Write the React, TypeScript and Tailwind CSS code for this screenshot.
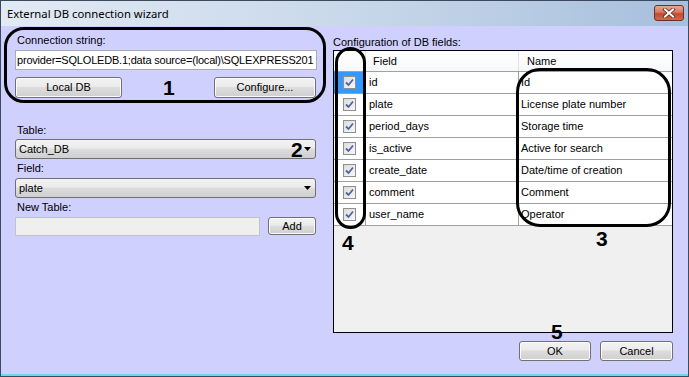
import React from "react";

const btnBg =
  "bg-[linear-gradient(#f3f3f3,#ebebeb_45%,#dddddd_50%,#cfcfcf)]";

function Btn({ children, className = "" }: { children: React.ReactNode; className?: string }) {
  return (
    <div
      className={`flex items-center justify-center rounded-[3px] border border-[#707070] ${btnBg} text-[11px] leading-[13px] text-black shadow-[inset_0_0_0_1px_#fcfcfc] ${className}`}
    >
      {children}
    </div>
  );
}

function Arrow() {
  return (
    <svg width="7" height="4" viewBox="0 0 7 4" className="shrink-0">
      <path d="M0 0 H7 L3.5 4 Z" fill="#000" />
    </svg>
  );
}

function Combo({ value }: { value: string }) {
  return (
    <div
      className={`ml-[11px] flex h-[20px] w-[301px] items-center rounded-[3px] border border-[#707070] ${btnBg} pl-[3px] pr-[4px] text-[11px] leading-[13px]`}
    >
      <span className="flex-1">{value}</span>
      <Arrow />
    </div>
  );
}

function Check() {
  return (
    <div className="flex h-[13px] w-[13px] items-center justify-center border border-[#8e8f8f] bg-[linear-gradient(135deg,#dcdcdc,#f8f8f8)]">
      <svg width="11" height="11" viewBox="0 0 11 11">
        <path d="M2 5.5 L4.5 8 L9 2.5" fill="none" stroke="#4f65a0" strokeWidth="1.8" />
      </svg>
    </div>
  );
}

const rows: [string, string][] = [
  ["id", "Id"],
  ["plate", "License plate number"],
  ["period_days", "Storage time"],
  ["is_active", "Active for search"],
  ["create_date", "Date/time of creation"],
  ["comment", "Comment"],
  ["user_name", "Operator"],
];

const num = "absolute text-[21px] font-bold leading-[21px] text-black";

export default function App() {
  return (
    <div className="relative flex h-[377px] w-[689px] flex-col overflow-hidden border border-[#3b4a5c] bg-[#d0d0ff] font-['Liberation_Sans',Arial,sans-serif] text-black">
      {/* Title bar */}
      <div className="flex h-[25px] shrink-0 bg-[linear-gradient(to_right,#e2eaf4,#c6d6e9_55%,#a6bfdc)]">
        <div className="flex-1 pl-[6px] pt-[5px] font-['Noto_Sans',sans-serif] text-[11.3px] leading-[15px] text-black">
          External DB connection wizard
        </div>
        <div className="mr-[4px] mt-[4px] flex h-[16px] w-[30px] items-center justify-center rounded-[3px] border border-[#6e2f24] bg-[linear-gradient(#e9a792,#d77760_45%,#c4492f_55%,#cf6a50)]">
          <svg width="14" height="10" viewBox="0 0 14 10">
            <path d="M3 1.5 L11 8.5 M11 1.5 L3 8.5" stroke="#5b2a22" strokeWidth="3.6" strokeLinecap="square" />
            <path d="M3 1.5 L11 8.5 M11 1.5 L3 8.5" stroke="#fff" strokeWidth="2" strokeLinecap="square" />
          </svg>
        </div>
      </div>

      {/* Body */}
      <div className="flex flex-1">
        {/* Left column */}
        <div className="flex w-[325px] flex-col pl-[3px]">
          <div className="mt-[1px] h-[76px] w-[322px] rounded-[20px] border-[3px] border-black px-[8px] pt-[4px]">
            <div className="pl-[2px] text-[11px] leading-[13px]">Connection string:</div>
            <div className="mt-[3px] flex h-[20px] w-[302px] items-center overflow-hidden whitespace-nowrap border border-[#abadb3] bg-white pl-[1px] text-[11px] leading-[13px] tracking-[-0.2px]">
              provider=SQLOLEDB.1;data source=(local)\SQLEXPRESS201
            </div>
            <div className="mt-[7px] flex w-[301px] justify-between">
              <Btn className="h-[21px] w-[107px]">Local DB</Btn>
              <Btn className="h-[21px] w-[102px]">Configure...</Btn>
            </div>
          </div>

          <div className="ml-[13px] mt-[21px] text-[11px] leading-[13px]">Table:</div>
          <div className="mt-[2px]">
            <Combo value="Catch_DB" />
          </div>
          <div className="ml-[13px] mt-[3px] text-[11px] leading-[13px]">Field:</div>
          <div className="mt-[3px]">
            <Combo value="plate" />
          </div>
          <div className="ml-[13px] mt-[3px] text-[11px] leading-[13px]">New Table:</div>
          <div className="ml-[11px] mt-[3px] flex items-start">
            <div className="h-[19px] w-[245px] border border-[#c3c3c3] bg-[#efefef]" />
            <Btn className="ml-[8px] h-[18px] w-[48px]">Add</Btn>
          </div>
        </div>

        {/* Right column */}
        <div className="ml-[7px] flex w-[340px] flex-col pt-[9px]">
          <div className="text-[11px] leading-[14px]">Configuration of DB fields:</div>
          <div className="mt-[1px] flex h-[283px] flex-col border border-black bg-[#f0f0f0]">
            <div className="flex h-[21px] border-b border-[#a0a0a0] bg-[linear-gradient(#ffffff,#f7f8fa)] text-[11px] leading-[13px]">
              <div className="w-[32px] border-r border-[#e2e3e5]" />
              <div className="flex w-[153px] items-center border-r border-[#e2e3e5] pl-[7px]">Field</div>
              <div className="flex flex-1 items-center pl-[8px]">Name</div>
            </div>
            {rows.map(([f, n], i) => (
              <div key={f} className="flex h-[22px] border-b border-[#a0a0a0] bg-white text-[11px] leading-[13px]">
                <div
                  className={`flex w-[32px] items-center justify-center border-r border-[#a0a0a0] ${
                    i === 0 ? "bg-[#3399ff]" : "bg-white"
                  }`}
                >
                  <Check />
                </div>
                <div className="flex w-[153px] items-center border-r border-[#a0a0a0] pl-[3px]">{f}</div>
                <div className="flex flex-1 items-center pl-[2px]">{n}</div>
              </div>
            ))}
          </div>
          <div className="mt-[8px] flex justify-end gap-[9px]">
            <Btn className="h-[20px] w-[72px]">OK</Btn>
            <Btn className="h-[20px] w-[73px]">Cancel</Btn>
          </div>
        </div>
      </div>
      <div className="h-[2px] shrink-0 bg-[#74d3ef]" />

      {/* Annotations */}
      <div className="pointer-events-none absolute left-[334px] top-[46px] h-[182px] w-[31px] rounded-full border-[3px] border-black" />
      <div className="pointer-events-none absolute left-[515px] top-[67px] h-[159px] w-[155px] rounded-[24px] border-[3px] border-black" />
      <div className={`${num} left-[162px] top-[76px]`}>1</div>
      <div className={`${num} left-[290px] top-[138px]`}>2</div>
      <div className={`${num} left-[595px] top-[227px]`}>3</div>
      <div className={`${num} left-[341px] top-[231px]`}>4</div>
      <div className={`${num} left-[550px] top-[320px]`}>5</div>
    </div>
  );
}
